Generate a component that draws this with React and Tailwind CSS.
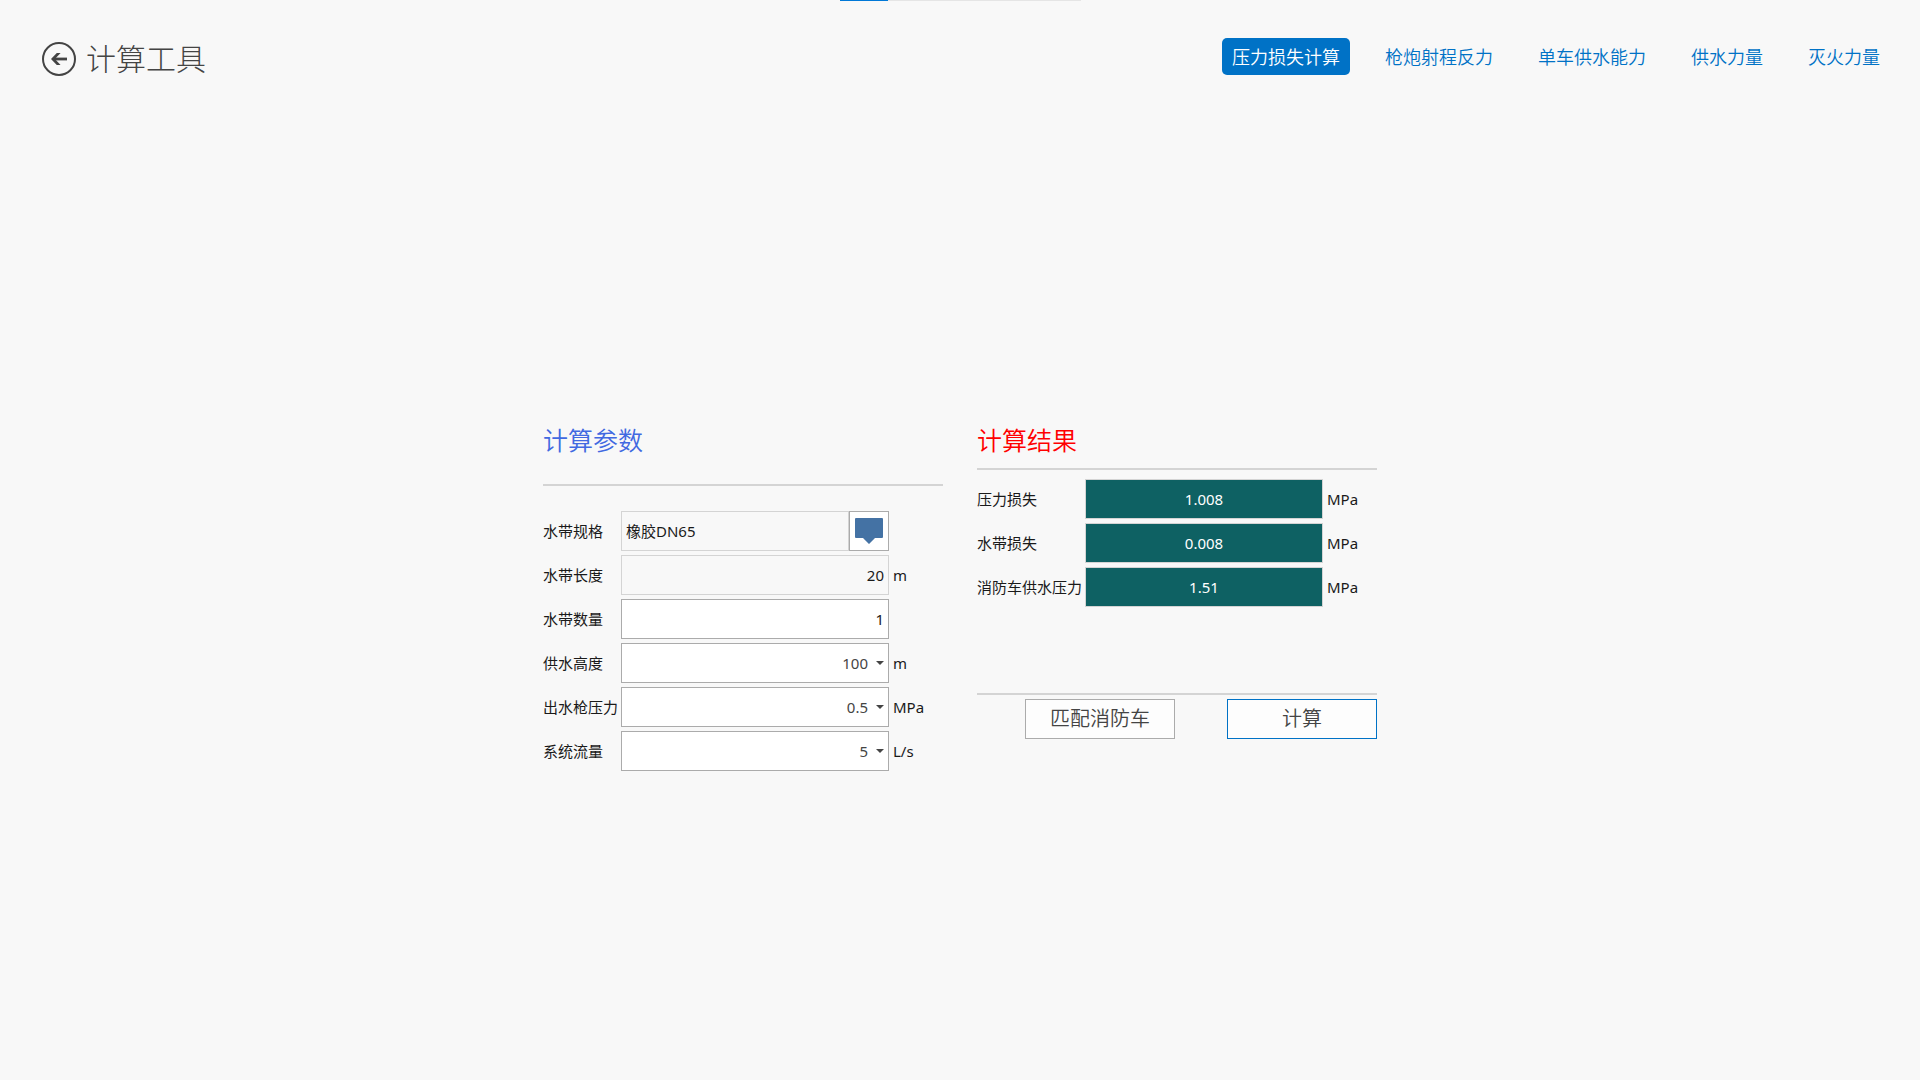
import { useState } from 'react';
import clsx from 'clsx';

const tabs = ['压力损失计算', '枪炮射程反力', '单车供水能力', '供水力量', '灭火力量'];

const results = [
  { id: 'pressureLoss', label: '压力损失', value: '1.008', unit: 'MPa' },
  { id: 'hoseLoss', label: '水带损失', value: '0.008', unit: 'MPa' },
  { id: 'supplyPressure', label: '消防车供水压力', value: '1.51', unit: 'MPa' },
];

function Row({ id, label, unit, labelClass, children }) {
  return (
    <div className="flex items-center h-10">
      <label htmlFor={id} className={clsx('shrink-0 whitespace-nowrap', labelClass)}>{label}</label>
      {children}
      {unit && <span className="ml-1">{unit}</span>}
    </div>
  );
}

function Dropdown({ id, value, options, onChange }) {
  return (
    <div className="relative w-[268px] h-10">
      <select
        id={id}
        value={value}
        onChange={e => onChange(e.target.value)}
        className="w-full h-full appearance-none border border-[#ababab] bg-white pl-1 pr-5 text-right [text-align-last:right] text-[#444444] outline-none"
      >
        {options.map(o => <option key={o} value={o}>{o}</option>)}
      </select>
      <svg className="absolute right-[5px] top-1/2 -translate-y-1/2 w-2 h-2 pointer-events-none" viewBox="0 0 8 8">
        <path d="M0 2h8L4 6z" fill="#444444" />
      </svg>
    </div>
  );
}

export default function App() {
  const [tab, setTab] = useState(tabs[0]);
  const [count, setCount] = useState('1');
  const [height, setHeight] = useState('100');
  const [pressure, setPressure] = useState('0.5');
  const [flow, setFlow] = useState('5');

  return (
    <div className="min-h-screen flex flex-col bg-[#f8f8f8] text-[#1a1a1a] text-[15px] leading-5 font-['Noto_Sans','Noto_Sans_CJK_SC',sans-serif]">
      {/* Page progress */}
      <div className="w-[241px] h-px mx-auto bg-[#e5e5e5]">
        <div className="w-12 h-px bg-[#0078d7]" />
      </div>

      {/* Header */}
      <header className="flex items-start justify-between h-[110px] pl-[42px] pr-[30px] pt-[37px]">
        <div className="flex items-center gap-2.5 h-[42px]">
          <button type="button" aria-label="返回" className="w-[34px] h-[34px]">
            <svg viewBox="0 0 34 34" fill="none" stroke="#444444">
              <circle cx="17" cy="17" r="16" strokeWidth="2" />
              <path d="M25 17H11" strokeWidth="2.8" />
              <path d="M9 17L14.8 11H18.6L12.9 17L18.6 23H14.8Z" fill="#444444" stroke="none" />
            </svg>
          </button>
          <h1 className="text-[30px] leading-10 font-light text-[#444444]">计算工具</h1>
        </div>
        <nav className="flex gap-[25px]">
          {tabs.map(t => (
            <button
              key={t}
              type="button"
              onClick={() => setTab(t)}
              className={clsx(
                'h-[37px] px-2.5 rounded-[5px] text-lg leading-6 font-[350]',
                t === tab ? 'bg-[#0072c6] text-white' : 'text-[#0072c6]'
              )}
            >
              {t}
            </button>
          ))}
        </nav>
      </header>

      <main className="flex-1 flex items-center justify-center">
        <div className="flex items-start gap-[34px]">
          {/* Parameters */}
          <section className="w-[400px]">
            <h2 className="text-[25px] leading-10 font-[350] text-[#4169e1]">计算参数</h2>
            <hr className="mt-6 mb-[25px] border-t-2 border-[#d4d4d4]" />
            <div className="flex flex-col gap-1">
              <Row id="hoseType" label="水带规格" labelClass="w-[78px]">
                <div className="flex w-[268px] h-10">
                  <input id="hoseType" readOnly defaultValue="橡胶DN65" className="flex-1 min-w-0 border border-[#d4d4d4] bg-[#f8f8f8] px-1 outline-none" />
                  <button type="button" aria-label="选择水带规格" className="w-10 border border-[#ababab] bg-white flex items-center justify-center">
                    <svg className="w-7 h-7" viewBox="0 0 28 28">
                      <path d="M1 1h26a1 1 0 0 1 1 1v18a1 1 0 0 1-1 1h-7l-6 6-6-6H1a1 1 0 0 1-1-1V2a1 1 0 0 1 1-1z" fill="#4472a4" />
                    </svg>
                  </button>
                </div>
              </Row>
              <Row id="hoseLength" label="水带长度" unit="m" labelClass="w-[78px]">
                <input id="hoseLength" readOnly defaultValue="20" className="w-[268px] h-10 border border-[#d4d4d4] bg-[#f8f8f8] px-1 text-right outline-none" />
              </Row>
              <Row id="hoseCount" label="水带数量" labelClass="w-[78px]">
                <input id="hoseCount" value={count} onChange={e => setCount(e.target.value)} className="w-[268px] h-10 border border-[#ababab] bg-white px-1 text-right outline-none" />
              </Row>
              <Row id="height" label="供水高度" unit="m" labelClass="w-[78px]">
                <Dropdown id="height" value={height} options={['50', '100', '150']} onChange={setHeight} />
              </Row>
              <Row id="pressure" label="出水枪压力" unit="MPa" labelClass="w-[78px]">
                <Dropdown id="pressure" value={pressure} options={['0.3', '0.5', '0.7']} onChange={setPressure} />
              </Row>
              <Row id="flow" label="系统流量" unit="L/s" labelClass="w-[78px]">
                <Dropdown id="flow" value={flow} options={['5', '10', '15']} onChange={setFlow} />
              </Row>
            </div>
          </section>

          {/* Results */}
          <section className="w-[400px]">
            <h2 className="text-[25px] leading-10 font-[350] text-[#ff0000]">计算结果</h2>
            <hr className="mt-2 mb-[9px] border-t-2 border-[#d4d4d4]" />
            <div className="flex flex-col gap-1">
              {results.map(r => (
                <Row key={r.id} id={r.id} label={r.label} unit={r.unit} labelClass="w-[108px]">
                  <input id={r.id} readOnly value={r.value} className="w-[238px] h-10 border border-[#d4d4d4] bg-[#0e6163] text-center text-white outline-none" />
                </Row>
              ))}
            </div>
            <hr className="mt-[86px] mb-1 border-t-2 border-[#d4d4d4]" />
            <div className="flex justify-end gap-[52px] text-xl text-[#444444]">
              <button type="button" className="w-[150px] h-10 border border-[#ababab] bg-[#fdfdfd] font-[350]">匹配消防车</button>
              <button type="button" className="w-[150px] h-10 border border-[#0072c6] bg-[#fdfdfd] font-[350]">计算</button>
            </div>
          </section>
        </div>
      </main>
    </div>
  );
}
